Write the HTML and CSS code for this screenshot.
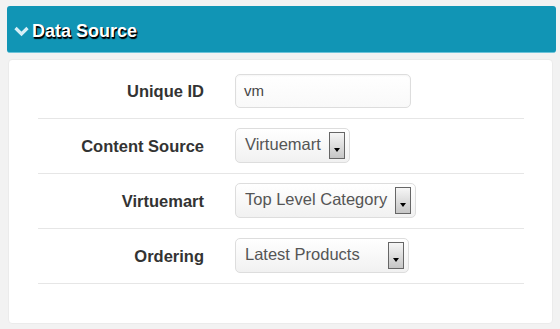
FILE: index.html
```html
<!DOCTYPE html>
<html lang="en">
<head>
    <meta charset="UTF-8">
    <title>Data Source</title>
    <link rel="stylesheet" href="styles.css">
</head>
<body>

    <div class="section-header">
        <svg class="chevron" width="15" height="11" viewBox="0 0 15 11"><polyline points="1.5,2 7.5,8 13.5,2" fill="none" stroke="#d6eef6" stroke-width="3.2"/></svg>
        <h2>Data Source</h2>
    </div>

    <div class="panel">
        <div class="form-row">
            <label>Unique ID</label>
            <div class="text-input">vm</div>
        </div>
        <div class="form-row">
            <label>Content Source</label>
            <div class="select w-source"><span class="value">Virtuemart</span><span class="arrow"></span></div>
        </div>
        <div class="form-row">
            <label>Virtuemart</label>
            <div class="select w-category"><span class="value">Top Level Category</span><span class="arrow"></span></div>
        </div>
        <div class="form-row">
            <label>Ordering</label>
            <div class="select w-ordering"><span class="value">Latest Products</span><span class="arrow"></span></div>
        </div>
    </div>

</body>
</html>
```

FILE: styles.css
```css
body { font-family: "Liberation Sans", Arial, sans-serif; background-color: #f2f2f2; margin: 0; padding: 6px 4px 0 7px; }
.section-header { background-color: #1195b5; height: 47px; border-radius: 3px; border-bottom: 1px solid #6cc3d9; box-sizing: border-box; display: flex; align-items: center; padding: 4px 0 0 7px; }
.section-header .chevron { margin-right: 3px; }
.section-header h2 { margin: 0; font-size: 18px; font-weight: bold; color: #fff; text-shadow: 1px 1px 0 #000, 1px 2px 1px #000; }
.panel { background-color: #fff; margin: 6px 3px 0 1px; border: 1px solid #ebebeb; border-radius: 4px; padding: 4px 28px 39px 29px; }
.form-row { display: flex; align-items: center; height: 54px; border-bottom: 1px solid #e6e6e6; }
.form-row label { width: 166px; text-align: right; font-weight: bold; font-size: 16.5px; color: #333; margin-right: 31px; }
.text-input { width: 176px; height: 34px; box-sizing: border-box; border: 1px solid #ddd; border-radius: 5px; padding: 0 8px; font-size: 15px; color: #444; line-height: 32px; background: linear-gradient(#fff, #f9f9f9); box-shadow: inset 0 1px 2px rgba(0,0,0,0.04); }
.select { height: 35px; box-sizing: border-box; border: 1px solid #ddd; border-radius: 5px; padding: 3px 4px 3px 9px; display: flex; align-items: stretch; justify-content: space-between; font-size: 16.5px; color: #555; background: linear-gradient(#fff, #f1f1f1); margin-top: -2px; }
.select .value { line-height: 22px; padding-top: 1px; white-space: nowrap; }
.select .arrow { width: 16px; box-sizing: border-box; border: 1px solid #666; background: linear-gradient(#f6f6f6, #c6c6c6); position: relative; margin-left: 4px; }
.select .arrow::after { content: ""; position: absolute; left: 4px; top: 15px; border-left: 3.5px solid transparent; border-right: 3.5px solid transparent; border-top: 4px solid #000; }
.w-source { width: 115px; }
.w-category { width: 181px; }
.w-ordering { width: 174px; }
```
